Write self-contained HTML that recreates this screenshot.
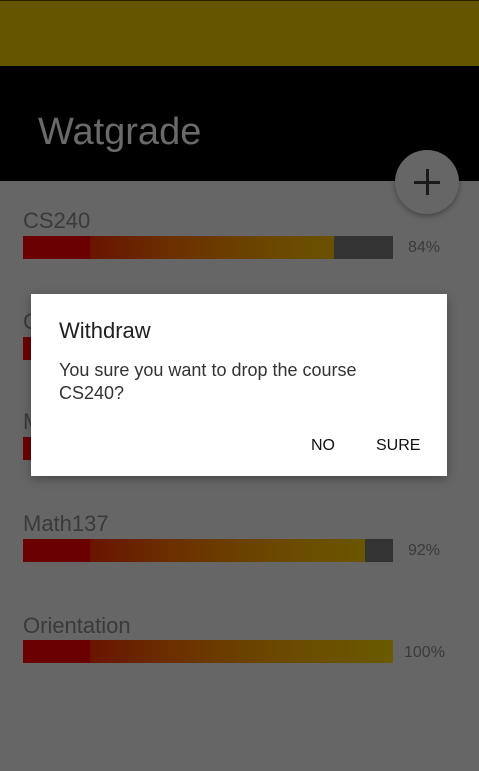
<!DOCTYPE html>
<html><head><style>
*{margin:0;padding:0;box-sizing:border-box}
body{width:479px;height:771px;overflow:hidden;background:#666;font-family:"Liberation Sans",sans-serif;position:relative}
.abs{position:absolute}
.bar{position:absolute;left:23px;width:370px;height:23px;background:linear-gradient(90deg,#6a0000 0,#6a0000 67px,#6a1400 67px,#6b3000 150px,#6b4800 250px,#6a5a00 370px)}
.rest{position:absolute;top:0;right:0;height:100%;background:#333}
.lbl{position:absolute;left:23px;font-size:22px;color:#3a3a3a}
.pct{position:absolute;font-size:16px;color:#3a3a3a}
</style></head><body>
<div class="abs" style="left:0;top:0;width:479px;height:66px;background:#665500;border-top:1px solid #2a2400"></div>
<div class="abs" style="left:0;top:66px;width:479px;height:115px;background:#000"></div>
<div class="abs" style="left:38px;top:111px;font-size:38px;color:#6a6a6a">Watgrade</div>
<div class="abs" style="left:395px;top:150px;width:64px;height:64px;border-radius:50%;background:#666;box-shadow:0 2px 6px rgba(0,0,0,.35)"></div>
<div class="abs" style="left:414px;top:181px;width:26px;height:3px;background:#1a1a1a"></div>
<div class="abs" style="left:425.5px;top:169px;width:3px;height:26px;background:#1a1a1a"></div>

<div class="lbl" style="top:208px">CS240</div>
<div class="bar" style="top:236px"><div class="rest" style="width:59px"></div></div>
<div class="pct" style="left:408px;top:239px">84%</div>

<div class="lbl" style="top:309px">C</div>
<div class="bar" style="top:337px"></div>
<div class="lbl" style="top:409px">M</div>
<div class="bar" style="top:437px"></div>

<div class="lbl" style="top:511px">Math137</div>
<div class="bar" style="top:539px"><div class="rest" style="width:28px"></div></div>
<div class="pct" style="left:408px;top:542px">92%</div>

<div class="lbl" style="top:613px">Orientation</div>
<div class="bar" style="top:640px"></div>
<div class="pct" style="left:404px;top:644px">100%</div>

<div class="abs" style="left:31px;top:294px;width:416px;height:182px;background:#fff;box-shadow:0 3px 10px rgba(0,0,0,.3)">
<div class="abs" style="left:28px;top:24px;font-size:22px;color:#212121">Withdraw</div>
<div class="abs" style="left:28px;top:65px;font-size:18px;line-height:23px;color:#333">You sure you want to drop the course<br>CS240?</div>
<div class="abs" style="left:280px;top:143px;font-size:16px;color:#111">NO</div>
<div class="abs" style="left:345px;top:143px;font-size:16px;color:#111">SURE</div>
</div>
</body></html>
